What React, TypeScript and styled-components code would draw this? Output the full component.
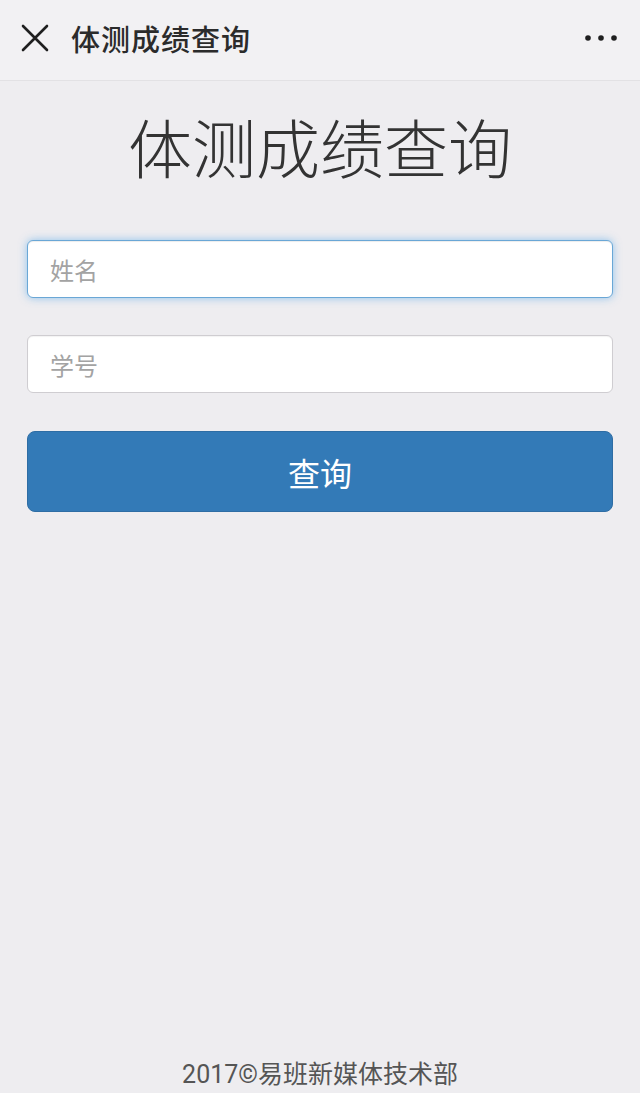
import React from "react";
import styled, { createGlobalStyle } from "styled-components";

const Global = createGlobalStyle`
  html, body { margin: 0; padding: 0; background: #efeef1; }
  body { font-family: "Noto Sans CJK SC", "Noto Sans", sans-serif; }
  * { box-sizing: border-box; }
`;

const Page = styled.div`
  min-height: 100vh;
  height: 1093px;
  display: flex;
  flex-direction: column;
  background: #eeedf0;
`;

const NavBar = styled.header`
  height: 81px;
  flex: none;
  display: flex;
  align-items: center;
  padding: 0 22px 0 20px;
  background: #f2f1f3;
  border-bottom: 1px solid #e2e1e4;
`;

const NavTitle = styled.div`
  flex: 1;
  margin-left: 21px;
  font-size: 29px;
  font-weight: 500;
  color: #2b2b2b;
  letter-spacing: 1px;
  line-height: 1;
  margin-top: -4px;
`;

const IconBox = styled.div`
  display: flex;
  align-items: center;
  margin-top: -4px;
`;

const Main = styled.main`
  flex: 1;
  display: flex;
  flex-direction: column;
  padding: 0 27px;
`;

const Heading = styled.h1`
  margin: 29px 0 0;
  text-align: center;
  font-size: 64px;
  font-weight: 300;
  color: #333;
  line-height: 1.1;
`;

const Form = styled.div`
  margin-top: 60px;
  display: flex;
  flex-direction: column;
  gap: 37px;
`;

const Input = styled.input<{ $focused?: boolean }>`
  width: 100%;
  height: 58px;
  border-radius: 6px;
  border: 1px solid ${(p) => (p.$focused ? "#6aa7d6" : "#cfcdd1")};
  background: #fff;
  padding: 0 22px;
  font-family: inherit;
  font-size: 24px;
  color: #555;
  outline: none;
  box-shadow: ${(p) =>
    p.$focused
      ? "inset 0 1px 1px rgba(0,0,0,.075), 0 0 8px rgba(102,175,233,.7)"
      : "inset 0 1px 1px rgba(0,0,0,.05)"};
  &::placeholder { color: #a3a3a3; }
`;

const Button = styled.button`
  width: 100%;
  height: 81px;
  margin-top: 1px;
  border: 1px solid #2e6da4;
  border-radius: 8px;
  background: #337ab7;
  color: #fff;
  font-family: inherit;
  font-size: 32px;
  cursor: pointer;
`;

const Footer = styled.footer`
  flex: none;
  text-align: center;
  font-size: 25px;
  color: #555;
  padding-bottom: 3px;
  line-height: 1.2;
  font-family: "Roboto", "Noto Sans CJK SC", sans-serif;
`;

export default function App() {
  return (
    <>
      <Global />
      <Page>
        <NavBar>
          <IconBox>
            <svg width="30" height="30" viewBox="0 0 30 30">
              <path d="M3 3 L27 27 M27 3 L3 27" stroke="#1f1f1f" strokeWidth="2.6" strokeLinecap="round" />
            </svg>
          </IconBox>
          <NavTitle>体测成绩查询</NavTitle>
          <IconBox>
            <svg width="34" height="8" viewBox="0 0 34 8">
              <circle cx="4" cy="4" r="2.8" fill="#1f1f1f" />
              <circle cx="17" cy="4" r="2.8" fill="#1f1f1f" />
              <circle cx="30" cy="4" r="2.8" fill="#1f1f1f" />
            </svg>
          </IconBox>
        </NavBar>
        <Main>
          <Heading>体测成绩查询</Heading>
          <Form>
            <Input $focused placeholder="姓名" />
            <Input placeholder="学号" />
            <Button>查询</Button>
          </Form>
        </Main>
        <Footer>2017©易班新媒体技术部</Footer>
      </Page>
    </>
  );
}
